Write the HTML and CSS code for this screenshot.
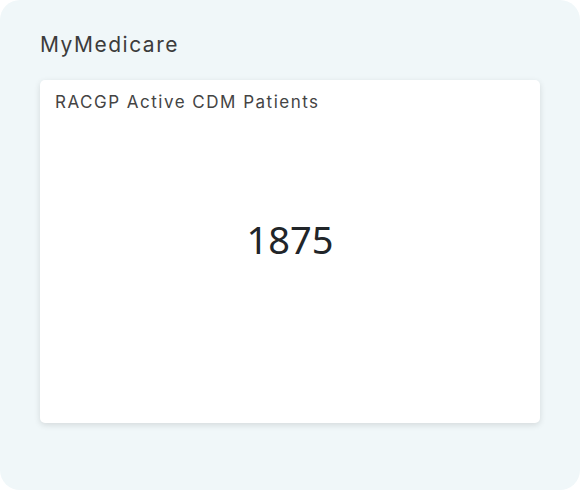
FILE: index.html
```html
<!DOCTYPE html>
<html>
<head>
<meta charset="utf-8">
<link rel="stylesheet" href="styles.css">
</head>
<body>
<div class="panel">
  <h2 class="panel-title">MyMedicare</h2>
  <div class="card">
    <div class="card-title">RACGP Active CDM Patients</div>
    <div class="card-value">1875</div>
  </div>
</div>
</body>
</html>
```
FILE: styles.css
```css
html, body {
  margin: 0;
  padding: 0;
  background: #ffffff;
}
.panel {
  box-sizing: border-box;
  width: 580px;
  height: 490px;
  background: #f0f7f9;
  border-radius: 20px;
  padding: 30px 40px 0 40px;
  display: flex;
  flex-direction: column;
}
.panel-title {
  margin: 0;
  font-family: Inter, "Noto Sans", sans-serif;
  font-weight: 400;
  font-size: 21px;
  line-height: 30px;
  color: #3c3c3c;
  letter-spacing: 1.5px;
}
.card {
  margin-top: 20px;
  height: 343px;
  background: #ffffff;
  border-radius: 5px;
  box-shadow: 0 2px 6px rgba(0, 0, 0, 0.12);
  padding: 10px 15px;
  box-sizing: border-box;
  display: flex;
  flex-direction: column;
}
.card-title {
  font-family: Inter, "Noto Sans", sans-serif;
  font-size: 17px;
  line-height: 24px;
  color: #444444;
  letter-spacing: 1.5px;
}
.card-value {
  flex: 1;
  display: flex;
  align-items: center;
  justify-content: center;
  font-family: "Noto Sans", sans-serif;
  font-size: 38px;
  color: #212529;
  padding-bottom: 50px;
}
```
